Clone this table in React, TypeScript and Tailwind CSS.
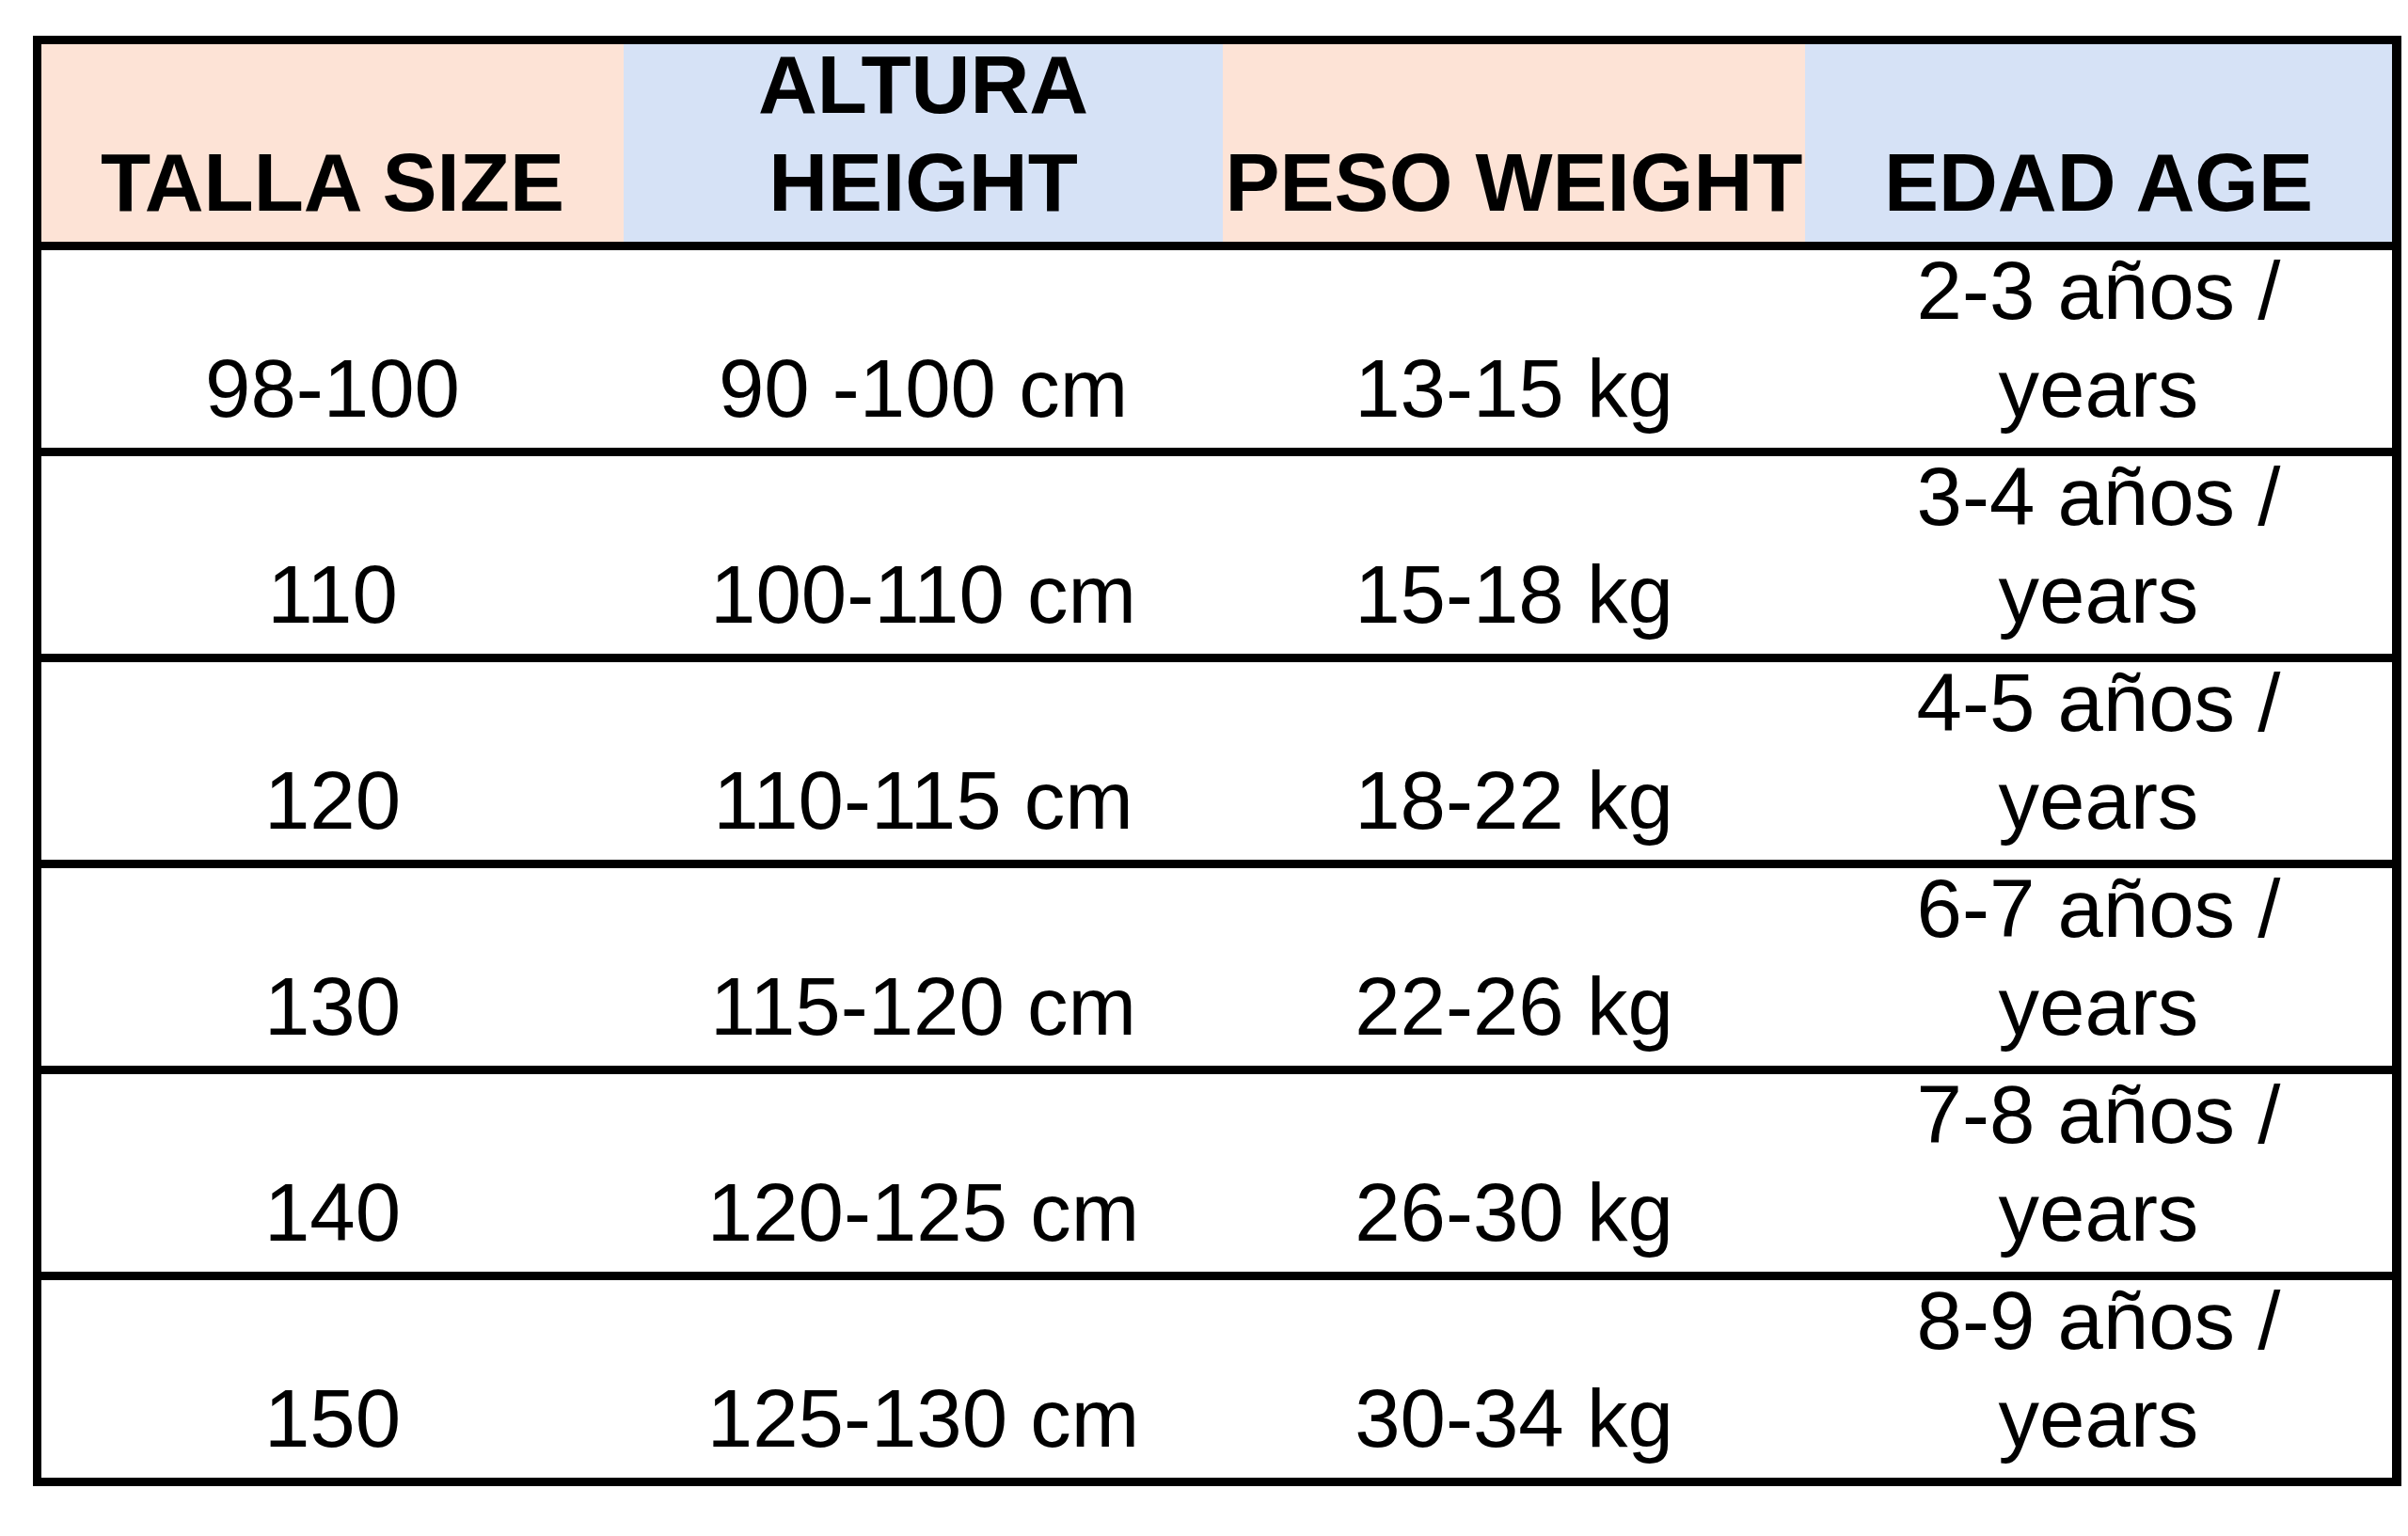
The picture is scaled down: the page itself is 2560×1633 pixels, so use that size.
const COLS = 'grid grid-cols-[619px_637px_619px_624px]';

const rows: [string, string, string, string][] = [
  ['98-100', '90 -100 cm', '13-15 kg', '2-3 años /'],
  ['110', '100-110 cm', '15-18 kg', '3-4 años /'],
  ['120', '110-115 cm', '18-22 kg', '4-5 años /'],
  ['130', '115-120 cm', '22-26 kg', '6-7 años /'],
  ['140', '120-125 cm', '26-30 kg', '7-8 años /'],
  ['150', '125-130 cm', '30-34 kg', '8-9 años /'],
];

function Cell({ children, bg = '' }: { children: React.ReactNode; bg?: string }) {
  return (
    <div className={`flex h-[210px] items-end justify-center pb-[11px] text-center leading-[104px] whitespace-nowrap ${bg}`}>
      <div>{children}</div>
    </div>
  );
}

export default function App() {
  return (
    <div className="min-h-screen w-full bg-white pt-[38px] pl-[35px] text-black font-['Liberation_Sans',Arial,sans-serif] text-[87px]">
      <div className="w-[2518px] border-t-[9px] border-l-[9px] border-r-[10px] border-black">
        {/* header */}
        <div className={`${COLS} h-[219px] border-b-[9px] border-black font-bold`}>
          <Cell bg="bg-[#fde3d6]">TALLA SIZE</Cell>
          <Cell bg="bg-[#d6e2f6]">
            ALTURA
            <br />
            HEIGHT
          </Cell>
          <Cell bg="bg-[#fde3d6]">PESO WEIGHT</Cell>
          <Cell bg="bg-[#d6e2f6]">EDAD AGE</Cell>
        </div>

        {rows.map(([size, height, weight, age]) => (
          <div key={size} className={`${COLS} h-[219px] border-b-[9px] border-black`}>
            <Cell>{size}</Cell>
            <Cell>{height}</Cell>
            <Cell>{weight}</Cell>
            <Cell>
              {age}
              <br />
              years
            </Cell>
          </div>
        ))}
      </div>
    </div>
  );
}
